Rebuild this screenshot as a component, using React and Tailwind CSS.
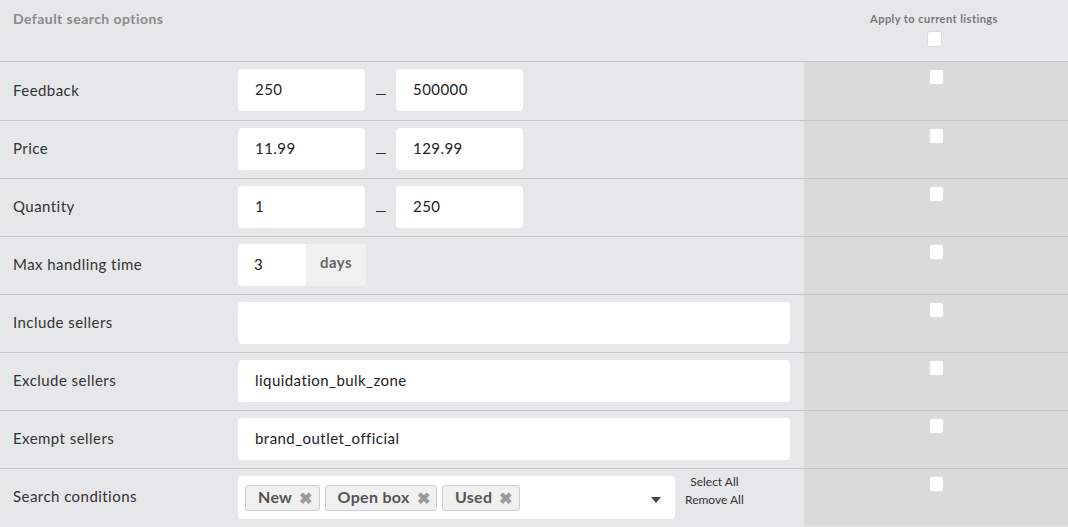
import React from "react";

const Checkbox = () => (
  <div className="w-[15px] h-[16px] bg-white rounded-[3px] border border-[#dcdcdc]" />
);

const Row = ({ label, children, last, first }) => (
  <div className={`flex ${last ? "" : "border-b border-[#c5c5c5]"}`}>
    <div className="w-[804px] flex items-start bg-[#e6e7e9]">
      <div className={`w-[238px] pl-[13px] pb-[2px] ${first ? "h-[58px]" : "h-[57px]"} flex items-center text-[15px] text-[#333]`}>{label}</div>
      <div className="flex-1 pt-[7px]">{children}</div>
    </div>
    <div className="flex-1 bg-[#dadada] flex justify-center pt-[7px]">
      <Checkbox />
    </div>
  </div>
);

const Input = ({ value, w }) => (
  <div className={`${w} h-[42px] bg-white rounded-[4px] flex items-center pl-[17px] pb-[2px] text-[15px] text-[#222]`}>{value}</div>
);

const Range = ({ a, b }) => (
  <div className="flex items-center">
    <Input value={a} w="w-[127px]" />
    <div className="w-[31px] h-[42px] flex justify-center">
      <div className="w-[10px] h-[1px] bg-[#333] mt-[25px]" />
    </div>
    <Input value={b} w="w-[127px]" />
  </div>
);

const Tag = ({ t }) => (
  <div className="h-[26px] flex items-center bg-[#f0f0f0] border border-[#d0d0d0] rounded-[3px] pl-[12px] pr-[6px] pb-[2px] text-[16px] font-bold text-[#555] tracking-[0.3px]">
    <span>{t}</span>
    <span className="ml-[7px] mt-[2px] text-[16px] leading-none text-[#9a9a9a]">✖</span>
  </div>
);

export default function App() {
  return (
    <div className="w-[1068px] h-[527px] overflow-hidden bg-[#e6e7e9] tracking-[0.45px]" style={{ fontFamily: "Lato, 'Liberation Sans', sans-serif" }}>
      <div className="flex h-[62px] border-b border-[#c5c5c5]">
        <div className="w-[804px] pl-[13px] pt-[8px] text-[14px] font-bold text-[#8a8a8a]">Default search options</div>
        <div className="flex-1 flex flex-col items-center pt-[12px] pr-[4px]">
          <div className="text-[11px] font-bold text-[#777] leading-[14px]">Apply to current listings</div>
          <div className="mt-[5px]"><Checkbox /></div>
        </div>
      </div>
      <Row label="Feedback" first><Range a="250" b="500000" /></Row>
      <Row label="Price"><Range a="11.99" b="129.99" /></Row>
      <Row label="Quantity"><Range a="1" b="250" /></Row>
      <Row label="Max handling time">
        <div className="flex">
          <div className="w-[68px] h-[42px] bg-white rounded-l-[4px] flex items-center pl-[16px] pb-[2px] text-[15px] text-[#222]">3</div>
          <div className="w-[60px] h-[42px] bg-[#f0f0f0] rounded-r-[4px] flex justify-center pt-[7px] text-[15px] font-bold text-[#666]">days</div>
        </div>
      </Row>
      <Row label="Include sellers"><Input value="" w="w-[552px]" /></Row>
      <Row label="Exclude sellers"><Input value="liquidation_bulk_zone" w="w-[552px]" /></Row>
      <Row label="Exempt sellers"><Input value="brand_outlet_official" w="w-[552px]" /></Row>
      <Row label="Search conditions" last>
        <div className="flex items-start">
          <div className="w-[437px] h-[43px] bg-white rounded-[4px] flex items-center pl-[7px] pr-[14px] gap-[5px]">
            <Tag t="New" />
            <Tag t="Open box" />
            <Tag t="Used" />
            <div className="flex-1" />
            <div className="w-0 h-0 border-l-[5px] border-r-[5px] border-t-[6px] border-l-transparent border-r-transparent border-t-[#444] mt-[4px]" />
          </div>
          <div className="ml-[10px] flex flex-col items-center text-[12px] text-[#333] leading-[18px] tracking-normal -mt-[3px]">
            <span>Select All</span>
            <span>Remove All</span>
          </div>
        </div>
      </Row>
    </div>
  );
}
